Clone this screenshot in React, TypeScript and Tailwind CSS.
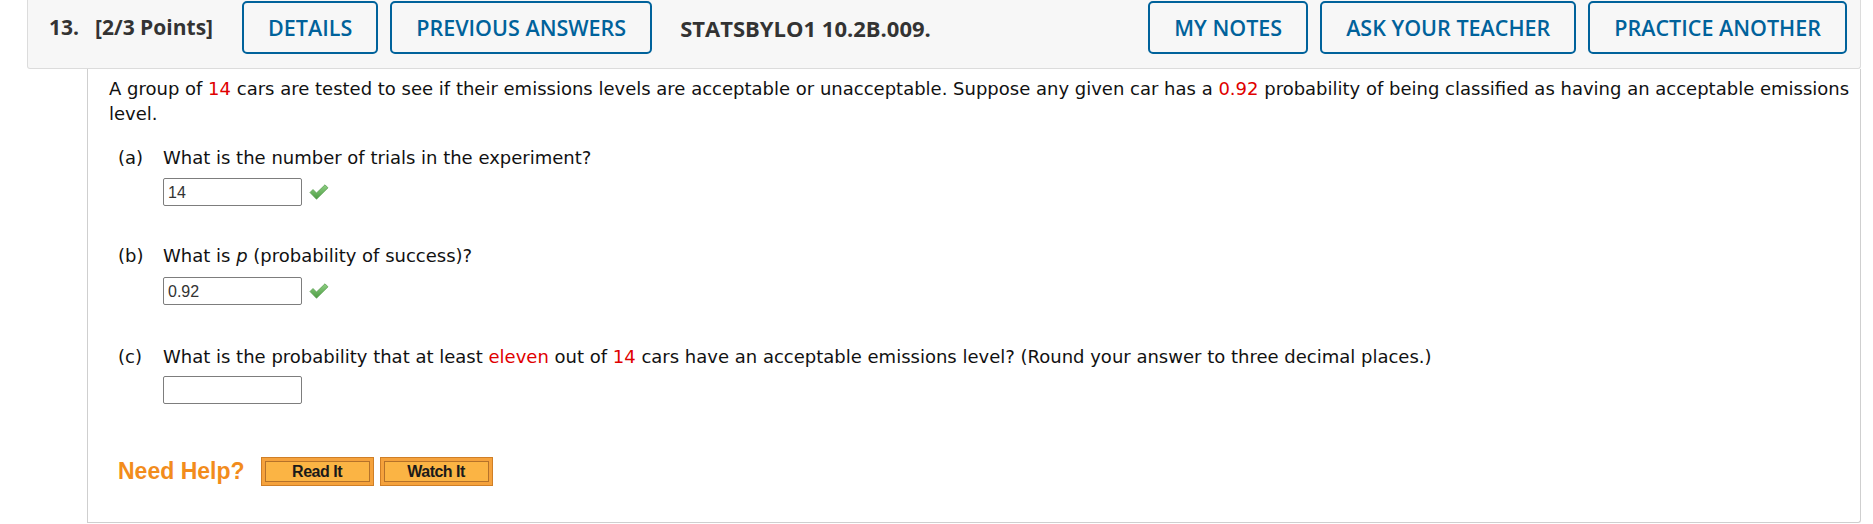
import React from "react";

const red = "text-[#e00000]";

function Check() {
  return (
    <svg width="20" height="16" viewBox="0 0 20 16" className="shrink-0">
      <defs>
        <linearGradient id="chk" x1="0" y1="0" x2="0" y2="1">
          <stop offset="0" stopColor="#8fd083" />
          <stop offset="1" stopColor="#4c9c43" />
        </linearGradient>
      </defs>
      <path
        d="M1 8.5 L4 5.5 L7.5 9 L16 0.8 L19 3.8 L7.5 15.2 Z"
        fill="url(#chk)"
        stroke="#5a9e52"
        strokeWidth="0.8"
        strokeLinejoin="round"
      />
    </svg>
  );
}

function AnswerBox({ value, checked }: { value?: string; checked?: boolean }) {
  return (
    <div className="flex items-center gap-[7px]">
      <div className="w-[139px] h-[28px] border border-[#7d7d7d] rounded-[2px] bg-white px-[4px] flex items-center text-[16px] text-[#333] font-['Liberation_Sans',Arial,sans-serif]">
        {value}
      </div>
      {checked && <Check />}
    </div>
  );
}

function HeaderButton({ label }: { label: string }) {
  return (
    <button className="h-[53px] px-[24px] border-2 border-[#00629b] rounded-[5px] bg-[#f7f7f7] text-[#00629b] text-[21.5px] font-semibold leading-none">
      {label}
    </button>
  );
}

function HelpButton({ label }: { label: string }) {
  return (
    <div className="w-[113px] h-[29px] bg-[#f5a23c] border border-[#d07f26] p-[3px]">
      <div className="h-full border border-[#b5722a] bg-[#fbb444] flex items-center justify-center text-[16px] font-bold tracking-[-0.5px] text-[#1a1a1a] font-['Liberation_Sans',Arial,sans-serif]">
        {label}
      </div>
    </div>
  );
}

export default function App() {
  return (
    <div className="w-[1873px] h-[524px] bg-white overflow-hidden">
      <div className="ml-[27px] w-[1834px]">
        <div className="flex items-start bg-[#f7f7f7] border-x border-b border-[#dcdcdc] rounded-b-[3px] pt-[1px] pb-[14px] pl-[21px] pr-[13px] font-['Open_Sans',sans-serif]">
          <div className="h-[53px] flex items-center text-[21px] font-bold text-[#333] leading-none">
            <span>13.</span>
            <span className="ml-[16px]">[2/3 Points]</span>
          </div>
          <div className="ml-[29px] flex gap-[12px]">
            <HeaderButton label="DETAILS" />
            <HeaderButton label="PREVIOUS ANSWERS" />
          </div>
          <div className="ml-[28px] h-[53px] flex items-center text-[22px] font-bold text-[#333] leading-none">
            STATSBYLO1 10.2B.009.
          </div>
          <div className="ml-auto flex gap-[12px]">
            <HeaderButton label="MY NOTES" />
            <HeaderButton label="ASK YOUR TEACHER" />
            <HeaderButton label="PRACTICE ANOTHER" />
          </div>
        </div>

        <div className="ml-[60px] h-[454px] border-x border-b border-[#cfcfcf] rounded-br-[3px] pl-[21px] pr-[8px] pt-[7px] text-[18px] leading-[25px] text-[#111] font-['DejaVu_Sans',Verdana,sans-serif]">
          <p>
            A group of <span className={red}>14</span> cars are tested to see if their emissions levels are
            acceptable or unacceptable. Suppose any given car has a <span className={red}>0.92</span> probability
            of being classified as having an acceptable emissions level.
          </p>

          <div className="pl-[9px]">
            <div className="mt-[19px]">
              <div className="flex">
                <span className="w-[45px] shrink-0">(a)</span>
                <span>What is the number of trials in the experiment?</span>
              </div>
              <div className="ml-[45px] mt-[8px]">
                <AnswerBox value="14" checked />
              </div>
            </div>

            <div className="mt-[37px]">
              <div className="flex">
                <span className="w-[45px] shrink-0">(b)</span>
                <span>
                  What is <i>p</i> (probability of success)?
                </span>
              </div>
              <div className="ml-[45px] mt-[9px]">
                <AnswerBox value="0.92" checked />
              </div>
            </div>

            <div className="mt-[39px]">
              <div className="flex">
                <span className="w-[45px] shrink-0">(c)</span>
                <span>
                  What is the probability that at least <span className={red}>eleven</span> out of{" "}
                  <span className={red}>14</span> cars have an acceptable emissions level? (Round your answer to
                  three decimal places.)
                </span>
              </div>
              <div className="ml-[45px] mt-[7px]">
                <AnswerBox />
              </div>
            </div>

            <div className="mt-[53px] flex items-center">
              <span className="text-[23px] font-bold text-[#f28c1c] font-['Liberation_Sans',Arial,sans-serif] leading-none">
                Need Help?
              </span>
              <div className="ml-[16px] flex gap-[6px]">
                <HelpButton label="Read It" />
                <HelpButton label="Watch It" />
              </div>
            </div>
          </div>
        </div>
      </div>
    </div>
  );
}
